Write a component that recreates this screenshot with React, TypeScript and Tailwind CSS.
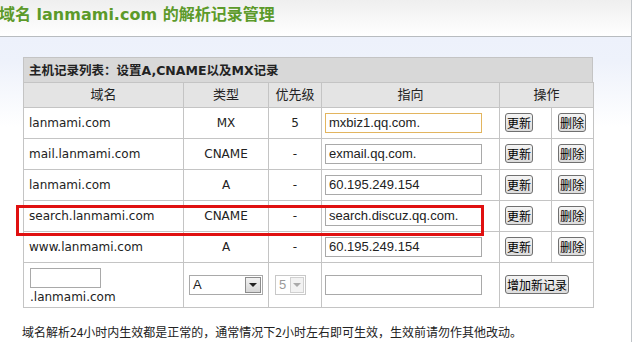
import React from "react";

const rows = [
  { host: "lanmami.com", type: "MX", prio: "5", target: "mxbiz1.qq.com.", focus: true },
  { host: "mail.lanmami.com", type: "CNAME", prio: "-", target: "exmail.qq.com." },
  { host: "lanmami.com", type: "A", prio: "-", target: "60.195.249.154" },
  { host: "search.lanmami.com", type: "CNAME", prio: "-", target: "search.discuz.qq.com." },
  { host: "www.lanmami.com", type: "A", prio: "-", target: "60.195.249.154" },
];

const cjk = "font-['DejaVu_Sans','Noto_Sans_CJK_SC',sans-serif]";

function Btn({ children }: { children: React.ReactNode }) {
  return (
    <span className="inline-flex h-[19px] items-center rounded-[3px] border border-[#707070] bg-gradient-to-b from-[#f4f4f4] to-[#dcdcdc] px-[1px] text-[12px] leading-none text-black font-['Noto_Sans_CJK_SC',sans-serif]">
      {children}
    </span>
  );
}

function TextBox({ value, focus }: { value: string; focus?: boolean }) {
  return (
    <div
      className={`flex h-[20px] w-[157px] items-center border bg-white pl-[3px] text-[13px] text-[#222] font-['Liberation_Sans',sans-serif] ${
        focus ? "border-[#e3b55f]" : "border-[#a9a9a9]"
      }`}
    >
      {value}
    </div>
  );
}

function Cell({ className = "", children }: { className?: string; children?: React.ReactNode }) {
  return <td className={`border border-[#c4c4c4] ${className}`}>{children}</td>;
}

export default function App() {
  return (
    <div className="relative h-[342px] w-[644px] overflow-hidden bg-white">
      <div className="h-[342px] w-[632px] border-r border-[#c0c4c8]">
        <div className="flex h-[37px] items-center border-b border-[#b8bcc0] bg-gradient-to-b from-[#efefef] to-white pb-[7px]">
          <span className={`-ml-[1px] text-[16px] font-bold text-[#5c9a2a] ${cjk}`}>
            域名 lanmami.com 的解析记录管理
          </span>
        </div>
        <div className="h-[305px] bg-[linear-gradient(to_bottom,#edf1fb_0px,#eef2fb_25px,#ffffff_90px)] pl-[23px] pt-[20px]">
          <table className={`w-[570px] border-collapse text-[12.5px] text-[#222] ${cjk}`}>
            <tbody>
              <tr className="h-[25px] bg-[#d8d8d8]">
                <Cell className="pl-[5px] font-bold">
                  <span className="relative top-[1px]">主机记录列表：设置A,CNAME以及MX记录</span>
                </Cell>
              </tr>
            </tbody>
          </table>
          <table className={`-mt-[1px] w-[570px] table-fixed border-collapse text-[12px] text-[#222] ${cjk}`}>
            <colgroup>
              <col className="w-[160px]" />
              <col className="w-[85px]" />
              <col className="w-[53px]" />
              <col className="w-[178px]" />
              <col className="w-[52px]" />
              <col className="w-[42px]" />
            </colgroup>
            <tbody>
              <tr className="h-[25px] bg-[#e4e4e4] text-center text-[13px]">
                <Cell>域名</Cell>
                <Cell>类型</Cell>
                <Cell>优先级</Cell>
                <Cell>指向</Cell>
                <td colSpan={2} className="border border-[#c4c4c4]">操作</td>
              </tr>
              {rows.map((r, i) => (
                <tr key={i} className="h-[31px] bg-white">
                  <Cell className="pl-[5px]">{r.host}</Cell>
                  <Cell className="text-center">{r.type}</Cell>
                  <Cell className="text-center">{r.prio}</Cell>
                  <Cell className="pl-[3px]">
                    <TextBox value={r.target} focus={r.focus} />
                  </Cell>
                  <Cell className="pl-[5px]">
                    <Btn>更新</Btn>
                  </Cell>
                  <Cell className="pl-[6px]">
                    <Btn>删除</Btn>
                  </Cell>
                </tr>
              ))}
              <tr className="h-[45px] bg-white">
                <Cell className="pl-[6px] align-top pt-[5px]">
                  <div className="h-[20px] w-[71px] border border-[#a9a9a9] bg-white" />
                  <div className="mt-[1px] leading-[16px]">.lanmami.com</div>
                </Cell>
                <Cell className="pl-[5px]">
                  <div className="flex h-[20px] w-[74px] items-center justify-between border border-[#a9a9a9] bg-white pl-[3px] text-[13px] font-['Liberation_Sans',sans-serif]">
                    <span>A</span>
                    <span className="mr-[1px] flex h-[16px] w-[16px] items-center justify-center border border-[#8c8c8c] bg-gradient-to-b from-[#f2f2f2] to-[#d6d6d6]">
                      <span className="h-0 w-0 border-x-[4px] border-t-[4px] border-x-transparent border-t-[#222]" />
                    </span>
                  </div>
                </Cell>
                <Cell className="pl-[6px]">
                  <div className="flex h-[20px] w-[31px] items-center justify-between border border-[#c8c8c8] bg-white pl-[3px] text-[13px] text-[#999] font-['Liberation_Sans',sans-serif]">
                    <span>5</span>
                    <span className="mr-[1px] flex h-[16px] w-[14px] items-center justify-center border border-[#d0d0d0] bg-[#f2f2f2]">
                      <span className="h-0 w-0 border-x-[4px] border-t-[4px] border-x-transparent border-t-[#aaa]" />
                    </span>
                  </div>
                </Cell>
                <Cell className="pl-[3px]">
                  <TextBox value="" />
                </Cell>
                <td colSpan={2} className="border border-[#c4c4c4] pl-[5px]">
                  <Btn>增加新记录</Btn>
                </td>
              </tr>
            </tbody>
          </table>
          <p className="-ml-[1px] mt-[15px] text-[12px] text-[#222] font-['Noto_Sans_CJK_SC',sans-serif]">
            域名解析24小时内生效都是正常的，通常情况下2小时左右即可生效，生效前请勿作其他改动。
          </p>
        </div>
      </div>
      <div className="pointer-events-none absolute left-[16px] top-[205px] h-[31px] w-[468px] border-[3px] border-[#e01010]" />
    </div>
  );
}
